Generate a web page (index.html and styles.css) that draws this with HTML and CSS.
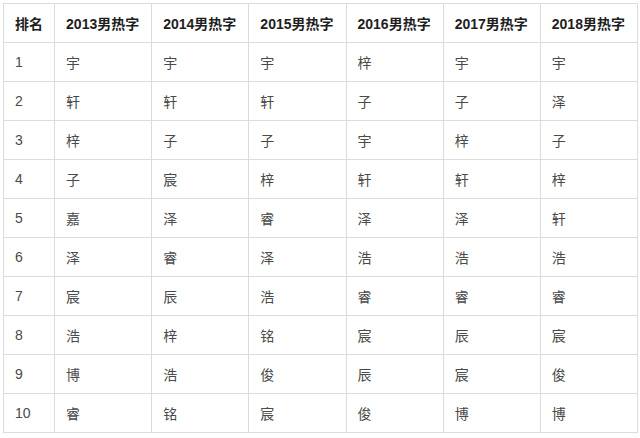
FILE: index.html
```html
<!DOCTYPE html>
<html lang="zh">
<head>
<meta charset="utf-8">
<title>男热字排名</title>
<link rel="stylesheet" href="styles.css">
</head>
<body>
<table class="rank-table">
  <colgroup>
    <col class="col-rank">
    <col class="col-year"><col class="col-year"><col class="col-year">
    <col class="col-year"><col class="col-year"><col class="col-year">
  </colgroup>
  <thead>
    <tr><th>排名</th><th>2013男热字</th><th>2014男热字</th><th>2015男热字</th><th>2016男热字</th><th>2017男热字</th><th>2018男热字</th></tr>
  </thead>
  <tbody>
    <tr><td>1</td><td>宇</td><td>宇</td><td>宇</td><td>梓</td><td>宇</td><td>宇</td></tr>
    <tr><td>2</td><td>轩</td><td>轩</td><td>轩</td><td>子</td><td>子</td><td>泽</td></tr>
    <tr><td>3</td><td>梓</td><td>子</td><td>子</td><td>宇</td><td>梓</td><td>子</td></tr>
    <tr><td>4</td><td>子</td><td>宸</td><td>梓</td><td>轩</td><td>轩</td><td>梓</td></tr>
    <tr><td>5</td><td>嘉</td><td>泽</td><td>睿</td><td>泽</td><td>泽</td><td>轩</td></tr>
    <tr><td>6</td><td>泽</td><td>睿</td><td>泽</td><td>浩</td><td>浩</td><td>浩</td></tr>
    <tr><td>7</td><td>宸</td><td>辰</td><td>浩</td><td>睿</td><td>睿</td><td>睿</td></tr>
    <tr><td>8</td><td>浩</td><td>梓</td><td>铭</td><td>宸</td><td>辰</td><td>宸</td></tr>
    <tr><td>9</td><td>博</td><td>浩</td><td>俊</td><td>辰</td><td>宸</td><td>俊</td></tr>
    <tr><td>10</td><td>睿</td><td>铭</td><td>宸</td><td>俊</td><td>博</td><td>博</td></tr>
  </tbody>
</table>
</body>
</html>
```
FILE: styles.css
```css
html, body {
  margin: 0;
  padding: 0;
  background: #ffffff;
}
body {
  padding: 3px 0 0 3px;
  font-family: "Liberation Sans", "Noto Sans CJK SC", sans-serif;
}
.rank-table {
  border-collapse: collapse;
  table-layout: fixed;
  width: 635px;
}
.col-rank { width: 51px; }
.col-year { width: 97px; }
.rank-table th,
.rank-table td {
  border: 1px solid #dcdcdc;
  height: 38px;
  padding: 0 0 0 11px;
  text-align: left;
  vertical-align: middle;
  white-space: nowrap;
  box-sizing: border-box;
}
.rank-table th {
  font-size: 14px;
  font-weight: bold;
  color: #1e1e1e;
  height: 39px;
}
.rank-table td {
  font-size: 14px;
  color: #4a4a4a;
  height: 39px;
}
```
